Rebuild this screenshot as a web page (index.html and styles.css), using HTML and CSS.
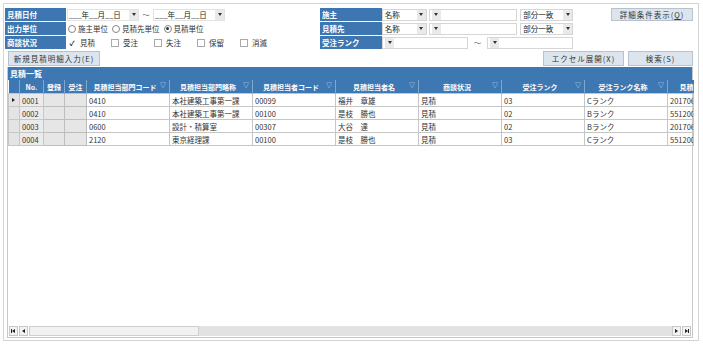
FILE: index.html
```html
<!DOCTYPE html>
<html lang="ja">
<head>
    <meta charset="UTF-8">
    <title>見積一覧</title>
    <link rel="stylesheet" href="styles.css">
</head>
<body>
    <div class="frame">
        <div class="search">
            <div class="cond">
                <div class="row">
                    <span class="label">見積日付</span>
                    <span class="date"><span class="date-text">___年__月__日</span><i class="drop"></i></span>
                    <span class="tilde">〜</span>
                    <span class="date"><span class="date-text">___年__月__日</span><i class="drop"></i></span>
                </div>
                <div class="row">
                    <span class="label">出力単位</span>
                    <span class="opt opt-r"><i class="radio"></i>施主単位</span>
                    <span class="opt opt-r"><i class="radio"></i>見積先単位</span>
                    <span class="opt opt-r"><i class="radio on"></i>見積単位</span>
                </div>
                <div class="row">
                    <span class="label">商談状況</span>
                    <span class="opt opt-c"><i class="check on">✓</i>見積</span>
                    <span class="opt opt-c"><i class="check"></i>受注</span>
                    <span class="opt opt-c"><i class="check"></i>失注</span>
                    <span class="opt opt-c"><i class="check"></i>保留</span>
                    <span class="opt opt-c"><i class="check"></i>消滅</span>
                </div>
            </div>

            <div class="cond cond-right">
                <div class="row">
                    <span class="label label-r">施主</span>
                    <span class="combo sel-name">名称<i class="drop"></i></span>
                    <span class="combo sel-text"><i class="drop"></i></span>
                    <span class="combo sel-match">部分一致<i class="drop"></i></span>
                </div>
                <div class="row">
                    <span class="label label-r">見積先</span>
                    <span class="combo sel-name">名称<i class="drop"></i></span>
                    <span class="combo sel-text"><i class="drop"></i></span>
                    <span class="combo sel-match">部分一致<i class="drop"></i></span>
                </div>
                <div class="row">
                    <span class="label label-r">受注ランク</span>
                    <span class="combo sel-rank"><i class="drop"></i></span>
                    <span class="tilde tilde-r">〜</span>
                    <span class="combo sel-rank"><i class="drop"></i></span>
                </div>
            </div>

            <div class="aside">
                <button class="btn btn-detail">詳細条件表示(<u>Q</u>)</button>
            </div>
        </div>

        <div class="actions">
            <button class="btn btn-new">新規見積明細入力(E)</button>
            <button class="btn btn-excel">エクセル展開(X)</button>
            <button class="btn btn-search">検索(S)</button>
        </div>

        <div class="list">
            <div class="list-title">見積一覧</div>
            <table class="grid">
                <colgroup>
                    <col class="c-head"><col class="c-no"><col class="c-flag"><col class="c-flag2">
                    <col class="c-data"><col class="c-data"><col class="c-data"><col class="c-data">
                    <col class="c-data"><col class="c-data"><col class="c-data"><col class="c-last">
                </colgroup>
                <thead>
                    <tr>
                        <th></th>
                        <th class="th-no">No.</th>
                        <th>登録</th>
                        <th>受注</th>
                        <th>見積担当部門コード<i class="filter">▽</i></th>
                        <th>見積担当部門略称<i class="filter">▽</i></th>
                        <th>見積担当者コード<i class="filter">▽</i></th>
                        <th>見積担当者名<i class="filter">▽</i></th>
                        <th>商談状況<i class="filter">▽</i></th>
                        <th>受注ランク<i class="filter">▽</i></th>
                        <th>受注ランク名称<i class="filter">▽</i></th>
                        <th class="th-last">見積</th>
                    </tr>
                </thead>
                <tbody>
                    <tr>
                        <td class="rh"><i class="cur"></i></td>
                        <td class="no">0001</td><td class="flag"></td><td class="flag"></td>
                        <td>0410</td><td>本社建築工事第一課</td><td>00099</td><td>福井　章雄</td>
                        <td>見積</td><td>03</td><td>Cランク</td><td>201706</td>
                    </tr>
                    <tr>
                        <td class="rh"></td>
                        <td class="no">0002</td><td class="flag"></td><td class="flag"></td>
                        <td>0410</td><td>本社建築工事第一課</td><td>00100</td><td>是枝　勝也</td>
                        <td>見積</td><td>02</td><td>Bランク</td><td>551200</td>
                    </tr>
                    <tr>
                        <td class="rh"></td>
                        <td class="no">0003</td><td class="flag"></td><td class="flag"></td>
                        <td>0600</td><td>設計・積算室</td><td>00307</td><td>大谷　達</td>
                        <td>見積</td><td>02</td><td>Bランク</td><td>201706</td>
                    </tr>
                    <tr>
                        <td class="rh"></td>
                        <td class="no">0004</td><td class="flag"></td><td class="flag"></td>
                        <td>2120</td><td>東京経理課</td><td>00100</td><td>是枝　勝也</td>
                        <td>見積</td><td>03</td><td>Cランク</td><td>551200</td>
                    </tr>
                </tbody>
            </table>
            <div class="list-body"></div>
            <div class="hscroll">
                <span class="sb-btn"><i class="arr-first"></i></span>
                <span class="sb-btn"><i class="arr-prev"></i></span>
                <span class="sb-thumb"></span>
                <span class="sb-track"></span>
                <span class="sb-btn"><i class="arr-next"></i></span>
                <span class="sb-btn"><i class="arr-last"></i></span>
            </div>
        </div>
    </div>
</body>
</html>
```

FILE: styles.css
```css
body {
    margin: 0;
    background: #fff;
    font-family: "Noto Sans CJK JP", "Noto Sans", sans-serif;
    font-size: 7.5px;
    color: #222;
}
.frame {
    margin: 3px;
    width: 694px;
    height: 336px;
    border: 1px solid #d4d4d4;
}

/* 検索条件 */
.search {
    display: flex;
    padding: 4px 5px 0 1px;
}
.cond {
    width: 315px;
    display: flex;
    flex-direction: column;
    gap: 1px;
}
.cond-right {
    width: 253px;
}
.row {
    display: flex;
    align-items: center;
    height: 13px;
    white-space: nowrap;
}
.label {
    width: 61px;
    height: 13px;
    line-height: 13px;
    margin-right: 1px;
    padding-left: 2px;
    box-sizing: border-box;
    background: #3d76b0;
    color: #fff;
    font-weight: bold;
}
.label-r {
    width: 62px;
    margin-right: 0;
}
.date {
    width: 72px;
    height: 12px;
    display: flex;
    align-items: center;
    justify-content: space-between;
    padding-left: 1px;
    box-sizing: border-box;
    border: 1px solid #e2e2e2;
}
.drop {
    width: 9px;
    height: 10px;
    flex-shrink: 0;
    display: flex;
    align-items: center;
    justify-content: center;
    background: #e9e9e9;
}
.drop::after {
    content: "";
    border-top: 3px solid #333;
    border-left: 2px solid transparent;
    border-right: 2px solid transparent;
}
.tilde {
    width: 14px;
    text-align: center;
    color: #555;
}
.opt {
    display: flex;
    align-items: center;
    gap: 2px;
    color: #333;
    white-space: nowrap;
    flex-shrink: 0;
}
.opt-r {
    margin-left: 1px;
    margin-right: 3px;
}
.opt-c {
    width: 43px;
    margin-left: 1px;
    margin-right: -1px;
}
.radio {
    width: 6px;
    height: 6px;
    flex-shrink: 0;
    border: 1px solid #888;
    border-radius: 50%;
    display: flex;
    align-items: center;
    justify-content: center;
}
.radio.on::after {
    content: "";
    width: 3px;
    height: 3px;
    border-radius: 50%;
    background: #333;
}
.check {
    width: 6px;
    height: 6px;
    flex-shrink: 0;
    margin-right: 2px;
    border: 1px solid #aaa;
    font-style: normal;
    font-size: 7px;
    line-height: 6px;
    text-align: center;
}
.check.on {
    border-color: transparent;
    font-weight: bold;
    color: #111;
}
.combo {
    height: 12px;
    display: flex;
    align-items: center;
    justify-content: space-between;
    padding-left: 2px;
    box-sizing: border-box;
    border: 1px solid #d6d6d6;
    background: #fff;
}
.sel-name {
    width: 45px;
    margin-right: 2px;
}
.sel-text {
    width: 89px;
    margin-right: 3px;
}
.sel-match {
    width: 53px;
}
.sel-rank {
    width: 86px;
}
.tilde-r {
    width: 19px;
}
.aside {
    margin-left: auto;
}

/* ボタン */
.btn {
    height: 15px;
    padding: 0;
    border: 1px solid #b7c2ce;
    background: #dce5ee;
    color: #333;
    font-family: inherit;
    font-size: 7.5px;
    letter-spacing: 1px;
}
.btn-detail {
    width: 82px;
    height: 13px;
}
.actions {
    display: flex;
    gap: 4px;
    padding: 2px 5px 0 4px;
}
.btn-new {
    width: 92px;
    margin-right: auto;
}
.btn-excel {
    width: 81px;
}
.btn-search {
    width: 65px;
}

/* 一覧 */
.list {
    margin: 1px 5px 0 3px;
    height: 270px;
    border: 1px solid #c8c8c8;
    border-top: 0;
    display: flex;
    flex-direction: column;
}
.list-title {
    height: 13px;
    line-height: 13px;
    padding-left: 2px;
    background: #3e78b3;
    color: #fff;
    font-weight: bold;
    font-size: 8px;
}
.grid {
    width: 685px;
    border-collapse: collapse;
    table-layout: fixed;
}
.c-head { width: 11px; }
.c-no { width: 24px; }
.c-flag { width: 21px; }
.c-flag2 { width: 22px; }
.c-data { width: 83px; }
.c-last { width: 26px; }
.grid th {
    position: relative;
    height: 13px;
    padding: 0 6px 0 0;
    background: #3e78b3;
    color: #fff;
    font-size: 7px;
    font-weight: bold;
    text-align: center;
    white-space: nowrap;
    overflow: hidden;
    border-left: 1px solid #82a7cc;
}
.grid th:first-child {
    border-left: 0;
}
.grid th:nth-child(-n+4) {
    padding: 0;
}
.th-no {
    font-size: 6px;
}
.grid th.th-last {
    padding: 0;
    text-align: right;
}
.filter {
    position: absolute;
    right: 3px;
    top: 0;
    font-style: normal;
    font-weight: normal;
    font-size: 6px;
    color: #dbe7f3;
}
.grid td {
    height: 12px;
    padding: 0 0 0 2px;
    border: 1px solid #c6c6c6;
    white-space: nowrap;
    overflow: hidden;
    color: #333;
}
.grid td.rh {
    padding: 0;
    background: #e4e4e4;
}
.grid td.no {
    background: #ebebeb;
}
.grid td.flag {
    background: #e6e6e6;
    border-color: #bdbdbd;
}
.cur {
    display: block;
    width: 0;
    height: 0;
    margin-left: 3px;
    border-left: 3px solid #222;
    border-top: 2px solid transparent;
    border-bottom: 2px solid transparent;
}
.list-body {
    flex: 1;
}

/* スクロールバー */
.hscroll {
    display: flex;
    height: 10px;
    margin: 0 0 1px 1px;
}
.sb-btn {
    width: 9px;
    height: 10px;
    box-sizing: border-box;
    border: 1px solid #c8c8c8;
    background: #f3f3f3;
    display: flex;
    align-items: center;
    justify-content: center;
    margin-right: 1px;
}
.arr-first, .arr-prev, .arr-next, .arr-last {
    width: 0;
    height: 0;
    border-top: 2px solid transparent;
    border-bottom: 2px solid transparent;
}
.arr-prev, .arr-first {
    border-right: 3px solid #222;
}
.arr-next, .arr-last {
    border-left: 3px solid #222;
}
.arr-first {
    box-shadow: -1px 0 0 0 #222;
}
.arr-last {
    box-shadow: 1px 0 0 0 #222;
}
.sb-thumb {
    width: 170px;
    box-sizing: border-box;
    border: 1px solid #cfcfcf;
    background: #f1f1f1;
}
.sb-track {
    flex: 1;
    background: #e2e2e2;
}
```
